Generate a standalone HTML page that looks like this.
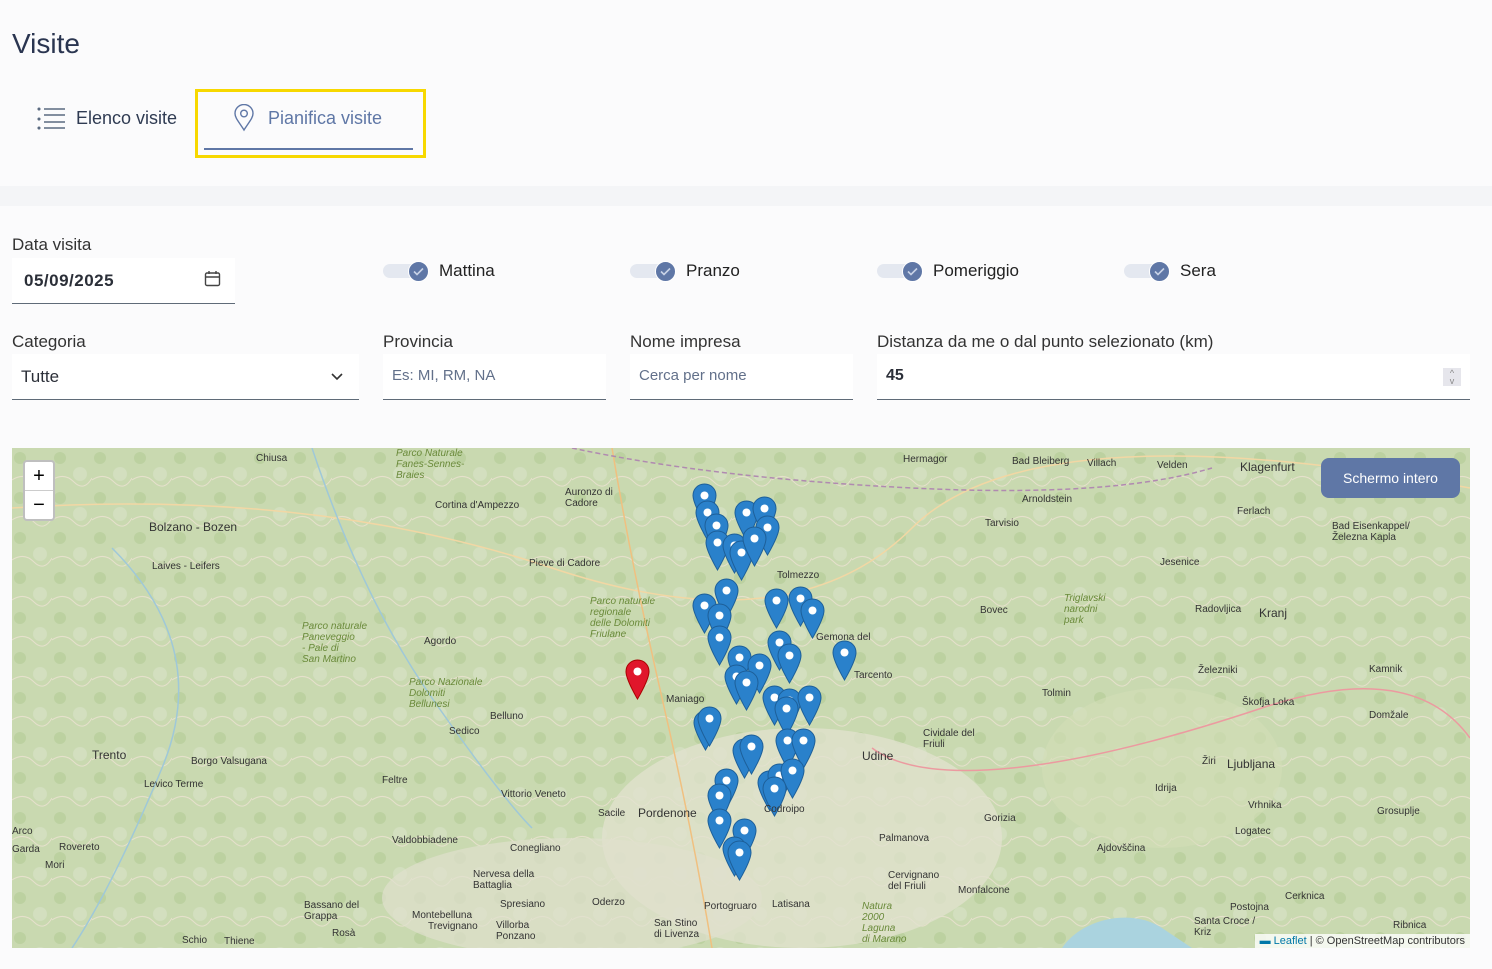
<!DOCTYPE html>
<html><head><meta charset="utf-8">
<style>
*{box-sizing:border-box;margin:0;padding:0}
body{width:1492px;height:969px;background:#fbfbfc;font-family:"Liberation Sans",sans-serif;color:#2b2f38;position:relative;overflow:hidden}
.abs{position:absolute}
h1{position:absolute;left:12px;top:28px;font-size:28px;font-weight:400;color:#2a3550}
.band{position:absolute;left:0;top:186px;width:1492px;height:20px;background:#f4f5f7}
.lbl{position:absolute;font-size:17px;color:#333}
.inp{position:absolute;background:#fff;border-bottom:1.5px solid #5f6b78;height:46px;font-size:16px;padding:13px 9px}
.ph{color:#62708a}
.tog{position:absolute;width:48px;height:22px}
.tog .tr{position:absolute;left:0;top:4px;width:40px;height:14px;border-radius:7px;background:#e4e8f0}
.tog .kn{position:absolute;left:25px;top:1px;width:21px;height:21px;border-radius:50%;background:#5f77a6;border:1px solid #fff}
.togl{position:absolute;font-size:17px;color:#222}
.map{position:absolute;left:12px;top:448px;width:1458px;height:500px;overflow:hidden;background:#c9d9b0}
.pl{position:absolute;font-size:10px;color:#333;white-space:nowrap}
.it{font-style:italic;color:#6a8a3a}
</style></head><body>
<h1>Visite</h1>
<svg class="abs" style="left:37px;top:107px" width="30" height="24" viewBox="0 0 30 24" fill="none" stroke="#5a6a80" stroke-width="1.5"><circle cx="2" cy="2" r="0.8" fill="#5a6a80"/><circle cx="2" cy="12" r="0.8" fill="#5a6a80"/><circle cx="2" cy="21" r="0.8" fill="#5a6a80"/><path d="M7 2H28M7 8H28M7 15H28M7 21H28"/></svg>
<div class="abs" style="left:76px;top:108px;font-size:18px;color:#2f3b52">Elenco visite</div>
<div class="abs" style="left:195px;top:89px;width:231px;height:69px;border:3px solid #f7d800"></div>
<div class="abs" style="left:204px;top:148px;width:209px;height:2px;background:#5f77a6"></div>
<svg class="abs" style="left:233px;top:104px" width="22" height="28" viewBox="0 0 22 28" fill="none" stroke="#5f77a6" stroke-width="1.4"><path d="M11 26C6 18 2 14 2 9.5A9 9 0 0 1 20 9.5C20 14 16 18 11 26Z"/><circle cx="11" cy="9.5" r="3.3"/></svg>
<div class="abs" style="left:268px;top:108px;font-size:18px;color:#5f77a6">Pianifica visite</div>
<div class="band"></div>

<div class="lbl" style="left:12px;top:235px">Data visita</div>
<div class="inp" style="left:12px;top:258px;width:223px;font-weight:bold;font-size:17px;padding-left:12px;letter-spacing:0.5px">05/09/2025</div>
<svg class="abs" style="left:204px;top:270px" width="17" height="17" viewBox="0 0 17 17" fill="none" stroke="#444" stroke-width="1.4"><rect x="1.5" y="3" width="14" height="12.5" rx="1.5"/><path d="M1.5 7H15.5M5 1V4M12 1V4"/></svg>

<div class="tog" style="left:383px;top:260px"><div class="tr"></div><div class="kn"><svg width="19" height="19" viewBox="0 0 19 19"><path d="M5 9.5L8 12.5L14 6.5" stroke="#c8d2e6" stroke-width="1.6" fill="none"/></svg></div></div><div class="togl" style="left:439px;top:261px">Mattina</div>
<div class="tog" style="left:630px;top:260px"><div class="tr"></div><div class="kn"><svg width="19" height="19" viewBox="0 0 19 19"><path d="M5 9.5L8 12.5L14 6.5" stroke="#c8d2e6" stroke-width="1.6" fill="none"/></svg></div></div><div class="togl" style="left:686px;top:261px">Pranzo</div>
<div class="tog" style="left:877px;top:260px"><div class="tr"></div><div class="kn"><svg width="19" height="19" viewBox="0 0 19 19"><path d="M5 9.5L8 12.5L14 6.5" stroke="#c8d2e6" stroke-width="1.6" fill="none"/></svg></div></div><div class="togl" style="left:933px;top:261px">Pomeriggio</div>
<div class="tog" style="left:1124px;top:260px"><div class="tr"></div><div class="kn"><svg width="19" height="19" viewBox="0 0 19 19"><path d="M5 9.5L8 12.5L14 6.5" stroke="#c8d2e6" stroke-width="1.6" fill="none"/></svg></div></div><div class="togl" style="left:1180px;top:261px">Sera</div>

<div class="lbl" style="left:12px;top:332px">Categoria</div>
<div class="inp" style="left:12px;top:354px;width:347px;font-size:17px">Tutte</div>
<svg class="abs" style="left:330px;top:372px" width="14" height="10" viewBox="0 0 14 10" fill="none" stroke="#333" stroke-width="1.6"><path d="M2 2L7 7L12 2"/></svg>
<div class="lbl" style="left:383px;top:332px">Provincia</div>
<div class="inp ph" style="left:383px;top:354px;width:223px;font-size:15px">Es: MI, RM, NA</div>
<div class="lbl" style="left:630px;top:332px">Nome impresa</div>
<div class="inp ph" style="left:630px;top:354px;width:223px;font-size:15px">Cerca per nome</div>
<div class="lbl" style="left:877px;top:332px">Distanza da me o dal punto selezionato (km)</div>
<div class="inp" style="left:877px;top:354px;width:593px;font-weight:bold;font-size:16px">45</div>
<div class="abs" style="left:1443px;top:368px;width:18px;height:18px;background:#e6e6ec;color:#888;font-size:9px;text-align:center;line-height:8px;padding-top:1px">^<br>v</div>

<div class="map">
<svg width="1458" height="500" style="position:absolute;left:0;top:0">
<defs>
<symbol id="pb" viewBox="0 0 25 41"><path d="M12.5 1C6 1 1 6 1 12.5C1 21 12.5 40 12.5 40C12.5 40 24 21 24 12.5C24 6 19 1 12.5 1Z" fill="#2a81cb" stroke="#1d5f99"/><circle cx="12.5" cy="12.5" r="4" fill="#fff"/></symbol>
<symbol id="pr" viewBox="0 0 25 41"><path d="M12.5 1C6 1 1 6 1 12.5C1 21 12.5 40 12.5 40C12.5 40 24 21 24 12.5C24 6 19 1 12.5 1Z" fill="#e0162b" stroke="#a00"/><circle cx="12.5" cy="12.5" r="4" fill="#fff"/></symbol>
<pattern id="tx" width="40" height="40" patternUnits="userSpaceOnUse"><rect width="40" height="40" fill="#c9d9b0"/><circle cx="8" cy="10" r="6" fill="#bcd1a0"/><circle cx="28" cy="26" r="7" fill="#d3dfbf"/><path d="M0 32Q12 24 22 34T40 30" stroke="#e6e0cc" stroke-width="1" fill="none"/></pattern>
</defs>
<rect x="0" y="0" width="1458" height="500" fill="url(#tx)"/>
<ellipse cx="790" cy="390" rx="200" ry="110" fill="#e2e1cf" opacity="0.75"/>
<ellipse cx="560" cy="450" rx="190" ry="60" fill="#e0dfcd" opacity="0.7"/>
<ellipse cx="1150" cy="320" rx="120" ry="80" fill="#d3deb8" opacity="0.6"/>
<path d="M1050 500C1070 470 1120 460 1150 480L1180 500Z" fill="#aad3df"/>
<path d="M0 60Q300 40 540 120T900 80T1458 40" stroke="#f2d7a4" stroke-width="1.5" fill="none"/>
<path d="M600 0Q620 120 650 250T700 500" stroke="#f0c080" stroke-width="1.5" fill="none"/>
<path d="M860 300Q900 330 1000 320T1250 260T1458 290" stroke="#ec9aa0" stroke-width="1.5" fill="none"/>
<path d="M560 0Q700 30 900 40T1200 20" stroke="#b08ab0" stroke-width="1.5" stroke-dasharray="5 3" fill="none"/>
<path d="M100 100Q200 200 150 320T60 500M300 0Q350 150 420 250T520 380" stroke="#9fc8d8" stroke-width="1.5" fill="none"/>
<g>
<use href="#pr" x="613" y="211" width="25" height="41"/>
<use href="#pb" x="680" y="35" width="25" height="41"/><use href="#pb" x="683" y="52" width="25" height="41"/><use href="#pb" x="692" y="65" width="25" height="41"/><use href="#pb" x="693" y="82" width="25" height="41"/><use href="#pb" x="710" y="85" width="25" height="41"/><use href="#pb" x="717" y="92" width="25" height="41"/><use href="#pb" x="722" y="52" width="25" height="41"/><use href="#pb" x="740" y="48" width="25" height="41"/><use href="#pb" x="743" y="67" width="25" height="41"/><use href="#pb" x="730" y="78" width="25" height="41"/>
<use href="#pb" x="702" y="130" width="25" height="41"/><use href="#pb" x="680" y="145" width="25" height="41"/><use href="#pb" x="695" y="155" width="25" height="41"/><use href="#pb" x="695" y="177" width="25" height="41"/><use href="#pb" x="752" y="140" width="25" height="41"/><use href="#pb" x="776" y="138" width="25" height="41"/><use href="#pb" x="788" y="150" width="25" height="41"/><use href="#pb" x="755" y="182" width="25" height="41"/><use href="#pb" x="765" y="195" width="25" height="41"/><use href="#pb" x="820" y="192" width="25" height="41"/>
<use href="#pb" x="715" y="197" width="25" height="41"/><use href="#pb" x="735" y="205" width="25" height="41"/><use href="#pb" x="712" y="216" width="25" height="41"/><use href="#pb" x="722" y="222" width="25" height="41"/><use href="#pb" x="750" y="237" width="25" height="41"/><use href="#pb" x="765" y="240" width="25" height="41"/><use href="#pb" x="785" y="237" width="25" height="41"/><use href="#pb" x="762" y="248" width="25" height="41"/>
<use href="#pb" x="681" y="262" width="25" height="41"/><use href="#pb" x="685" y="258" width="25" height="41"/><use href="#pb" x="720" y="290" width="25" height="41"/><use href="#pb" x="727" y="286" width="25" height="41"/><use href="#pb" x="763" y="280" width="25" height="41"/><use href="#pb" x="779" y="280" width="25" height="41"/>
<use href="#pb" x="702" y="320" width="25" height="41"/><use href="#pb" x="695" y="335" width="25" height="41"/><use href="#pb" x="745" y="322" width="25" height="41"/><use href="#pb" x="755" y="315" width="25" height="41"/><use href="#pb" x="768" y="310" width="25" height="41"/><use href="#pb" x="750" y="328" width="25" height="41"/>
<use href="#pb" x="695" y="360" width="25" height="41"/><use href="#pb" x="720" y="370" width="25" height="41"/><use href="#pb" x="710" y="388" width="25" height="41"/><use href="#pb" x="715" y="392" width="25" height="41"/>
</g>
</svg>
<div class="pl" style="left:244px;top:5px">Chiusa</div>
<div class="pl" style="left:137px;top:72px;font-size:12px">Bolzano - Bozen</div>
<div class="pl" style="left:140px;top:113px">Laives - Leifers</div>
<div class="pl" style="left:423px;top:52px">Cortina d'Ampezzo</div>
<div class="pl" style="left:553px;top:39px">Auronzo di<br>Cadore</div>
<div class="pl" style="left:517px;top:110px">Pieve di Cadore</div>
<div class="pl" style="left:412px;top:188px">Agordo</div>
<div class="pl" style="left:478px;top:263px">Belluno</div>
<div class="pl" style="left:437px;top:278px">Sedico</div>
<div class="pl" style="left:80px;top:300px;font-size:12px">Trento</div>
<div class="pl" style="left:179px;top:308px">Borgo Valsugana</div>
<div class="pl" style="left:132px;top:331px">Levico Terme</div>
<div class="pl" style="left:370px;top:327px">Feltre</div>
<div class="pl" style="left:489px;top:341px">Vittorio Veneto</div>
<div class="pl" style="left:586px;top:360px">Sacile</div>
<div class="pl" style="left:626px;top:358px;font-size:12px">Pordenone</div>
<div class="pl" style="left:654px;top:246px">Maniago</div>
<div class="pl" style="left:765px;top:122px">Tolmezzo</div>
<div class="pl" style="left:804px;top:184px">Gemona del</div>
<div class="pl" style="left:842px;top:222px">Tarcento</div>
<div class="pl" style="left:850px;top:301px;font-size:12px">Udine</div>
<div class="pl" style="left:911px;top:280px">Cividale del<br>Friuli</div>
<div class="pl" style="left:752px;top:356px">Codroipo</div>
<div class="pl" style="left:867px;top:385px">Palmanova</div>
<div class="pl" style="left:380px;top:387px">Valdobbiadene</div>
<div class="pl" style="left:498px;top:395px">Conegliano</div>
<div class="pl" style="left:461px;top:421px">Nervesa della<br>Battaglia</div>
<div class="pl" style="left:292px;top:452px">Bassano del<br>Grappa</div>
<div class="pl" style="left:400px;top:462px">Montebelluna</div>
<div class="pl" style="left:488px;top:451px">Spresiano</div>
<div class="pl" style="left:580px;top:449px">Oderzo</div>
<div class="pl" style="left:692px;top:453px">Portogruaro</div>
<div class="pl" style="left:760px;top:451px">Latisana</div>
<div class="pl" style="left:876px;top:422px">Cervignano<br>del Friuli</div>
<div class="pl" style="left:946px;top:437px">Monfalcone</div>
<div class="pl" style="left:972px;top:365px">Gorizia</div>
<div class="pl" style="left:1085px;top:395px">Ajdovščina</div>
<div class="pl" style="left:1030px;top:240px">Tolmin</div>
<div class="pl" style="left:1215px;top:309px;font-size:12px">Ljubljana</div>
<div class="pl" style="left:1247px;top:158px;font-size:12px">Kranj</div>
<div class="pl" style="left:1228px;top:12px;font-size:12px">Klagenfurt</div>
<div class="pl" style="left:1000px;top:8px">Bad Bleiberg</div>
<div class="pl" style="left:1075px;top:10px">Villach</div>
<div class="pl" style="left:1145px;top:12px">Velden</div>
<div class="pl" style="left:891px;top:6px">Hermagor</div>
<div class="pl" style="left:1010px;top:46px">Arnoldstein</div>
<div class="pl" style="left:973px;top:70px">Tarvisio</div>
<div class="pl" style="left:1225px;top:58px">Ferlach</div>
<div class="pl" style="left:1148px;top:109px">Jesenice</div>
<div class="pl" style="left:1183px;top:156px">Radovljica</div>
<div class="pl" style="left:968px;top:157px">Bovec</div>
<div class="pl" style="left:1320px;top:73px">Bad Eisenkappel/<br>Železna Kapla</div>
<div class="pl it" style="left:1052px;top:145px">Triglavski<br>narodni<br>park</div>
<div class="pl" style="left:1186px;top:217px">Železniki</div>
<div class="pl" style="left:1230px;top:249px">Škofja Loka</div>
<div class="pl" style="left:1357px;top:216px">Kamnik</div>
<div class="pl" style="left:1357px;top:262px">Domžale</div>
<div class="pl" style="left:1190px;top:308px">Žiri</div>
<div class="pl" style="left:1143px;top:335px">Idrija</div>
<div class="pl" style="left:1236px;top:352px">Vrhnika</div>
<div class="pl" style="left:1365px;top:358px">Grosuplje</div>
<div class="pl" style="left:1223px;top:378px">Logatec</div>
<div class="pl" style="left:1273px;top:443px">Cerknica</div>
<div class="pl" style="left:1218px;top:454px">Postojna</div>
<div class="pl" style="left:1182px;top:468px">Santa Croce /<br>Kriz</div>
<div class="pl" style="left:1381px;top:472px">Ribnica</div>
<div class="pl it" style="left:578px;top:148px">Parco naturale<br>regionale<br>delle Dolomiti<br>Friulane</div>
<div class="pl it" style="left:290px;top:173px">Parco naturale<br>Paneveggio<br>- Pale di<br>San Martino</div>
<div class="pl it" style="left:397px;top:229px">Parco Nazionale<br>Dolomiti<br>Bellunesi</div>
<div class="pl it" style="left:384px;top:0px">Parco Naturale<br>Fanes-Sennes-<br>Braies</div>
<div class="pl" style="left:0px;top:378px">Arco</div>
<div class="pl" style="left:0px;top:396px">Garda</div>
<div class="pl" style="left:47px;top:394px">Rovereto</div>
<div class="pl" style="left:33px;top:412px">Mori</div>
<div class="pl" style="left:170px;top:487px">Schio</div>
<div class="pl" style="left:212px;top:488px">Thiene</div>
<div class="pl" style="left:320px;top:480px">Rosà</div>
<div class="pl" style="left:416px;top:473px">Trevignano</div>
<div class="pl" style="left:484px;top:472px">Villorba<br>Ponzano</div>
<div class="pl" style="left:642px;top:470px">San Stino<br>di Livenza</div>
<div class="pl it" style="left:850px;top:453px">Natura<br>2000<br>Laguna<br>di Marano</div>
<div class="abs" style="left:11px;top:12px;width:32px;height:61px;background:#fff;border:2px solid rgba(0,0,0,0.25);border-radius:4px;font-size:20px;text-align:center;line-height:28px;color:#000"><div style="border-bottom:1px solid #ccc;height:29px">+</div><div>−</div></div>
<div class="abs" style="left:1309px;top:10px;width:139px;height:40px;background:#5f77a6;border-radius:8px;color:#fff;font-size:14px;text-align:center;line-height:40px">Schermo intero</div>
<div class="abs" style="right:0;bottom:0;background:rgba(255,255,255,0.8);font-size:11px;padding:1px 5px;color:#333"><span style="color:#0078a8">▬ Leaflet</span> | © OpenStreetMap contributors</div>
</div>
</body></html>
